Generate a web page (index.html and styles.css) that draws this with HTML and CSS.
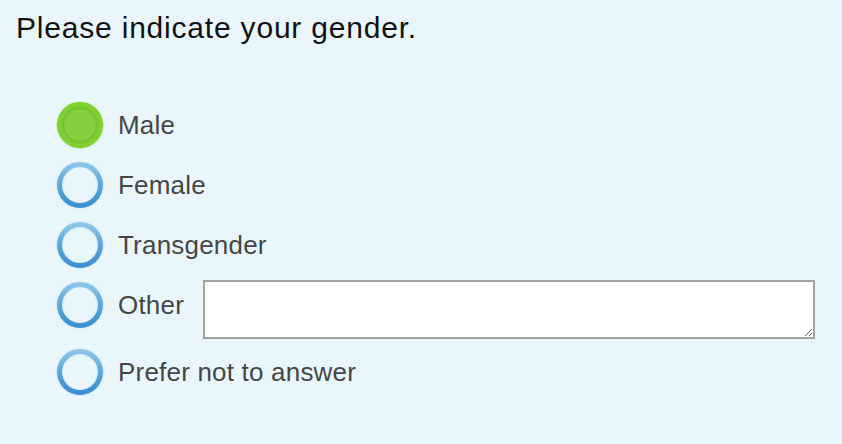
FILE: index.html
```html
<!DOCTYPE html>
<html lang="en">

<head>
    <meta charset="UTF-8">
    <meta name="viewport" content="width=device-width, initial-scale=1.0">
    <title>Gender</title>
    <link rel="stylesheet" href="styles.css">
</head>

<body>
    <div class="question">
        <h2>Please indicate your gender.</h2>
        <form class="options">
            <label class="option">
                <input type="radio" name="gender" value="male" checked>
                <span class="radio"></span>
                <span class="text">Male</span>
            </label>
            <label class="option">
                <input type="radio" name="gender" value="female">
                <span class="radio"></span>
                <span class="text">Female</span>
            </label>
            <label class="option">
                <input type="radio" name="gender" value="transgender">
                <span class="radio"></span>
                <span class="text">Transgender</span>
            </label>
            <label class="option">
                <input type="radio" name="gender" value="other">
                <span class="radio"></span>
                <span class="text">Other</span>
                <textarea class="other-text" name="other"></textarea>
            </label>
            <label class="option">
                <input type="radio" name="gender" value="none">
                <span class="radio"></span>
                <span class="text">Prefer not to answer</span>
            </label>
        </form>
    </div>
</body>

</html>
```

FILE: styles.css
```css
body {
    font-family: 'Liberation Sans', Arial, sans-serif;
    background-color: #e9f7fd;
    margin: 0;
    padding: 0;
}

.question {
    padding: 12px 0 0 16px;
}

h2 {
    font-size: 30px;
    font-weight: normal;
    letter-spacing: 0.8px;
    color: #111;
    margin: 0;
    line-height: 32px;
}

.options {
    padding: 51px 0 0 41px;
}

.option {
    display: flex;
    align-items: flex-start;
    cursor: pointer;
}

.option input[type="radio"] {
    display: none;
}

.radio {
    width: 46px;
    height: 46px;
    margin-top: 7px;
    border-radius: 50%;
    box-sizing: border-box;
    border: 5px solid transparent;
    background: linear-gradient(#e9f7fd, #e9f7fd) padding-box,
                linear-gradient(#92c8ea, #5aa6dc 50%, #3a8ccd) border-box;
    box-shadow: 0 0 1.5px rgba(70, 150, 210, 0.45), inset 0 0 1.5px rgba(70, 150, 210, 0.45);
    flex-shrink: 0;
}

.option input:checked + .radio {
    border: none;
    width: 48px;
    height: 48px;
    margin-top: 6px;
    margin-left: -1px;
    margin-right: -1px;
    box-shadow: none;
    background: radial-gradient(circle at 50% 50%, #86d03e 0, #86d03e 15px, #74c22b 16.5px, #78c72d 17.5px, #7ecf31 19px, #81d332 22.5px, rgba(129, 211, 50, 0) 24px);
}

.text {
    font-size: 26px;
    letter-spacing: 0.2px;
    line-height: 60px;
    color: #464646;
    margin-left: 15px;
}

.other-text {
    width: 612px;
    height: 59px;
    margin: 5px 0 3px 19px;
    box-sizing: border-box;
    border: 2px solid #a3a3a3;
    background-color: #fff;
    resize: both;
    outline: none;
    font-family: 'Liberation Sans', Arial, sans-serif;
    font-size: 16px;
}
```
